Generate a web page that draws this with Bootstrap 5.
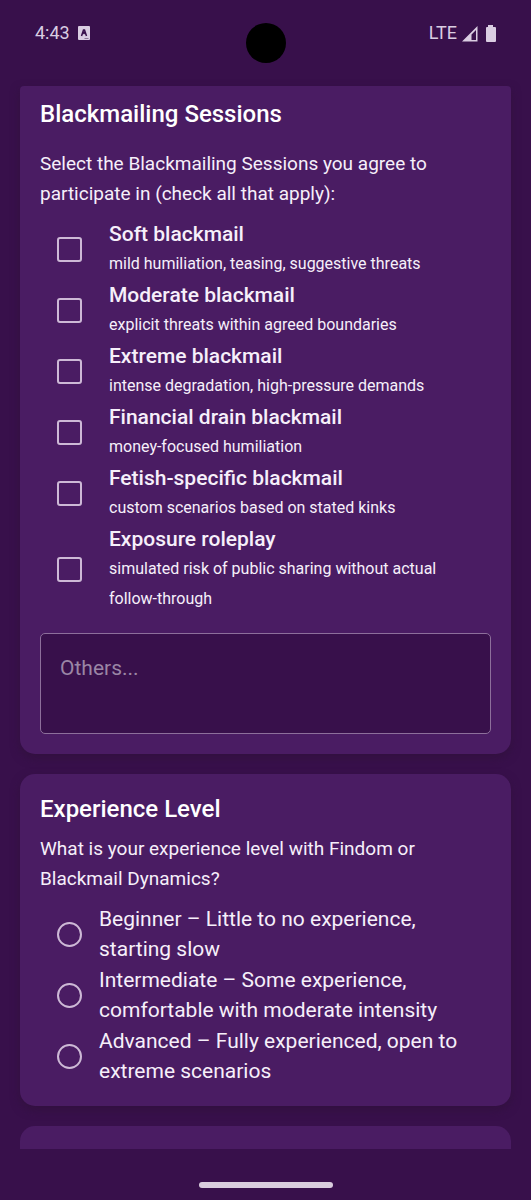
<!DOCTYPE html>
<html lang="en">
<head>
<meta charset="utf-8">
<meta name="viewport" content="width=device-width, initial-scale=1">
<title>Session preferences</title>
<link href="https://cdn.jsdelivr.net/npm/bootstrap@5.3.0/dist/css/bootstrap.min.css" rel="stylesheet">
<style>
  body { background: #38104b; color: #f6effa; font-family: Roboto, "Liberation Sans", sans-serif; font-size: 19px; line-height: 30px; }
  .status-bar { height: 86px; padding: 18px 35px 0; color: #dacde2; }
  .status-bar span { font-size: 18px; }
  .camera { width: 40px; height: 40px; top: 23px; left: 50%; margin-left: -20px; background: #000; }
  .scroll-area { padding: 0 20px; gap: 20px; }
  .panel { background: #4a1c63; border-radius: 15px; padding: 20px; box-shadow: 0 4px 10px #32113f; }
  .panel-first { border-radius: 4px 4px 15px 15px; padding-top: 13px; }
  .panel-next { border-radius: 15px 15px 0 0; box-shadow: none; }
  .panel h2 { font-size: 24px; font-weight: 500; line-height: 30px; color: #fff; margin: 0; }
  .panel p { margin: 10px 0 0; }
  .panel-first p { margin-top: 20px; }
  .choices { margin-top: 10px; padding-left: 17px; gap: 1px; }
  .choice { gap: 27px; }
  .choice-radio { gap: 17px; font-size: 21px; }
  .choice strong { font-size: 21px; font-weight: 500; }
  .choice small { font-size: 16px; }
  .choice .form-check-input { width: 25px; height: 25px; margin: 0; border: 2px solid #cdb9d6; background-color: transparent; }
  .choice .form-check-input[type=checkbox] { border-radius: 3px; }
  .choice .form-check-input:checked { background-color: #9a5cc0; }
  .others { background: #38104b; border: 1px solid #8d6f9b; border-radius: 5px; height: 101px; margin-top: 19px; padding: 19px; font-size: 21px; line-height: 30px; color: #fff; resize: none; }
  .others:focus { background: #38104b; color: #fff; }
  .others::placeholder { color: #9a86a5; opacity: 1; }
  .home-area { height: 51px; padding-top: 33px; }
  .home-pill { width: 134px; height: 6px; border-radius: 3px; background: #d9cddd; }
</style>
</head>
<body>
<div class="d-flex flex-column min-vh-100">
  <header class="status-bar position-relative d-flex justify-content-between align-items-start">
    <div class="d-flex align-items-center">
      <span>4:43</span>
      <svg class="ms-2" width="12" height="14" viewBox="0 0 12 14" aria-hidden="true"><rect width="12" height="14" rx="1" fill="#dacde2"/><path d="M3.500 10 5.500 4h1L8.500 10M4.500 8 6 6.500 7.500 8" fill="none" stroke="#38104b" stroke-width="1.500"/><path d="M6.500 12.500h4" stroke="#8c7798"/></svg>
    </div>
    <div class="camera position-absolute rounded-circle"></div>
    <div class="d-flex align-items-center">
      <span>LTE</span>
      <svg class="ms-1" width="35" height="17" viewBox="0 0 35 17" aria-hidden="true"><path d="M1 16.500 16.500 1v15.500zM10.500 9.500V15H15V5z" fill="#dacde2" fill-rule="evenodd"/><path d="M27 0h5v2h2a1 1 0 0 1 1 1v13a1 1 0 0 1-1 1h-8a1 1 0 0 1-1-1V3a1 1 0 0 1 1-1h1z" fill="#dacde2"/></svg>
    </div>
  </header>

  <main class="scroll-area flex-grow-1 d-flex flex-column">
    <section class="panel panel-first">
      <h2>Blackmailing Sessions</h2>
      <p>Select the Blackmailing Sessions you agree to participate in (check all that apply):</p>
      <div class="choices d-flex flex-column">
        <div class="choice d-flex align-items-center"><input class="form-check-input flex-shrink-0" type="checkbox" id="c1"><label for="c1"><strong class="d-block">Soft blackmail</strong><small class="d-block">mild humiliation, teasing, suggestive threats</small></label></div>
        <div class="choice d-flex align-items-center"><input class="form-check-input flex-shrink-0" type="checkbox" id="c2"><label for="c2"><strong class="d-block">Moderate blackmail</strong><small class="d-block">explicit threats within agreed boundaries</small></label></div>
        <div class="choice d-flex align-items-center"><input class="form-check-input flex-shrink-0" type="checkbox" id="c3"><label for="c3"><strong class="d-block">Extreme blackmail</strong><small class="d-block">intense degradation, high-pressure demands</small></label></div>
        <div class="choice d-flex align-items-center"><input class="form-check-input flex-shrink-0" type="checkbox" id="c4"><label for="c4"><strong class="d-block">Financial drain blackmail</strong><small class="d-block">money-focused humiliation</small></label></div>
        <div class="choice d-flex align-items-center"><input class="form-check-input flex-shrink-0" type="checkbox" id="c5"><label for="c5"><strong class="d-block">Fetish-specific blackmail</strong><small class="d-block">custom scenarios based on stated kinks</small></label></div>
        <div class="choice d-flex align-items-center"><input class="form-check-input flex-shrink-0" type="checkbox" id="c6"><label for="c6"><strong class="d-block">Exposure roleplay</strong><small class="d-block">simulated risk of public sharing without actual <span class="text-nowrap">follow-through</span></small></label></div>
      </div>
      <textarea class="others form-control" placeholder="Others..." aria-label="Others"></textarea>
    </section>

    <section class="panel">
      <h2>Experience Level</h2>
      <p>What is your experience level with Findom or Blackmail Dynamics?</p>
      <div class="choices d-flex flex-column">
        <div class="choice choice-radio d-flex align-items-center"><input class="form-check-input flex-shrink-0" type="radio" name="level" id="r1"><label for="r1">Beginner – Little to no experience, starting slow</label></div>
        <div class="choice choice-radio d-flex align-items-center"><input class="form-check-input flex-shrink-0" type="radio" name="level" id="r2"><label for="r2">Intermediate – Some experience, comfortable with moderate intensity</label></div>
        <div class="choice choice-radio d-flex align-items-center"><input class="form-check-input flex-shrink-0" type="radio" name="level" id="r3"><label for="r3">Advanced – Fully experienced, open to extreme scenarios</label></div>
      </div>
    </section>

    <section class="panel panel-next flex-grow-1 p-0"></section>
  </main>

  <footer class="home-area d-flex justify-content-center"><div class="home-pill"></div></footer>
</div>
<script src="https://cdn.jsdelivr.net/npm/bootstrap@5.3.0/dist/js/bootstrap.bundle.min.js"></script>
</body>
</html>
